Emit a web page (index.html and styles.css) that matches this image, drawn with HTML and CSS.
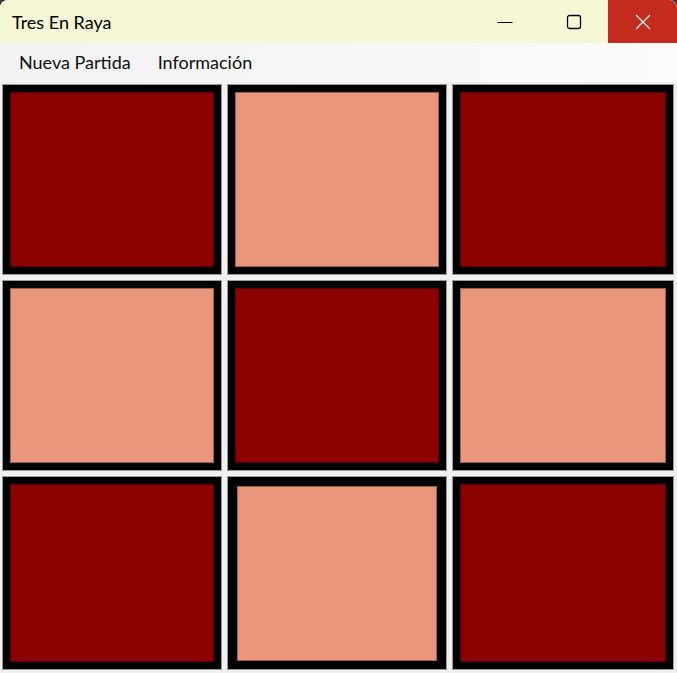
FILE: index.html
```html
<!DOCTYPE html>
<html lang="es">
<head>
<meta charset="utf-8">
<title>Tres En Raya</title>
<link rel="stylesheet" href="styles.css">
</head>
<body>
<div class="window">
  <header class="titlebar">
    <span class="title">Tres En Raya</span>
    <div class="controls">
      <button class="ctl" aria-label="Minimizar">
        <svg width="16" height="16" viewBox="0 0 16 16"><path d="M0.5 8.5H15.5" stroke="#000" stroke-width="1"/></svg>
      </button>
      <button class="ctl" aria-label="Maximizar">
        <svg width="16" height="16" viewBox="0 0 16 16"><rect x="1.5" y="1.5" width="13" height="13" rx="2" fill="none" stroke="#000" stroke-width="1.3"/></svg>
      </button>
      <button class="ctl close" aria-label="Cerrar">
        <svg width="16" height="16" viewBox="0 0 16 16"><path d="M1 1L15 15M15 1L1 15" stroke="#fff" stroke-width="1.2"/></svg>
      </button>
    </div>
  </header>
  <nav class="menubar">
    <span class="menu-item">Nueva Partida</span>
    <span class="menu-item">Información</span>
  </nav>
  <main class="board">
    <div class="cell"><div class="fill dark"></div></div>
    <div class="cell"><div class="fill light"></div></div>
    <div class="cell"><div class="fill dark"></div></div>
    <div class="cell"><div class="fill light"></div></div>
    <div class="cell"><div class="fill dark"></div></div>
    <div class="cell"><div class="fill light"></div></div>
    <div class="cell"><div class="fill dark"></div></div>
    <div class="cell focused"><div class="fill light"></div></div>
    <div class="cell"><div class="fill dark"></div></div>
  </main>
</div>
</body>
</html>
```

FILE: styles.css
```css
html, body {
  margin: 0;
  padding: 0;
  width: 677px;
  height: 673px;
  overflow: hidden;
  background: #3a3a3a;
}

.window {
  width: 677px;
  height: 673px;
  display: flex;
  flex-direction: column;
  background: #f0f0f0;
  border-radius: 8px 8px 0 0;
  overflow: hidden;
  font-family: Lato, "Noto Sans", sans-serif;
}

.titlebar {
  height: 43px;
  flex: none;
  display: flex;
  align-items: center;
  background: #f6f7d4;
}

.title {
  padding-left: 12px;
  font-size: 18px;
  color: #000;
  flex: 1;
}

.controls {
  display: flex;
  height: 100%;
}

.ctl {
  width: 69px;
  height: 43px;
  border: 0;
  padding: 0;
  margin: 0;
  background: transparent;
  display: flex;
  align-items: center;
  justify-content: center;
}

.ctl.close {
  background: #c42b1c;
}

.menubar {
  height: 39px;
  flex: none;
  display: flex;
  align-items: center;
  padding-left: 10px;
  background: linear-gradient(to right, #f2f2f2, #fbfbfb);
}

.menu-item {
  font-size: 18px;
  color: #101010;
  padding: 0 9px 2px;
  margin-right: 9px;
}

.board {
  display: grid;
  grid-template-columns: 220px 220px 222px;
  grid-template-rows: 191px 191px 194px;
  column-gap: 5px;
  row-gap: 5px;
  padding: 2px 0 0 2px;
}

.cell {
  box-sizing: border-box;
  border: 1px solid #9a9a9a;
  background: #000;
  padding: 7px;
  display: flex;
}

.cell.focused {
  padding: 9px 9px 8px;
}

.fill {
  flex: 1;
  border: 1px solid rgba(0, 0, 0, 0.35);
}

.fill.dark {
  background: #8b0000;
}

.fill.light {
  background: #e9967a;
}
```
